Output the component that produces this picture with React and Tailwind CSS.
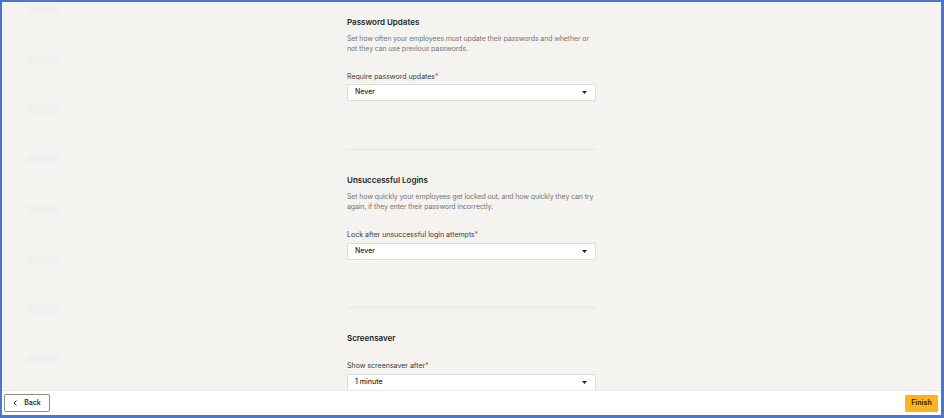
import React from 'react';

const font = { fontFamily: 'Inter, "Noto Sans", sans-serif' };

const Caret = () => (
  <svg width="5" height="3" viewBox="0 0 5 3" aria-hidden="true">
    <path d="M0 0h5L2.5 3z" fill="#1f1f1f" />
  </svg>
);

const Select = ({ value, className = '' }) => (
  <div
    className={`flex h-[17px] items-center justify-between rounded-[2px] border border-[#dcdcdc] bg-white pl-[7px] pr-[8px] text-[7px] font-medium text-[#2a2a2a] ${className}`}
  >
    <span>{value}</span>
    <Caret />
  </div>
);

const Label = ({ children, className = '' }) => (
  <div className={`h-[10px] text-[7px] leading-[10px] text-[#3a3a3a] ${className}`}>
    {children}
    <span className="text-[#e0453a]">*</span>
  </div>
);

const Title = ({ children, className = '' }) => (
  <h2 className={`h-[12px] text-[8px] font-semibold leading-[12px] text-[#1e1e1e] ${className}`}>
    {children}
  </h2>
);

const Desc = ({ children }) => (
  <p className="mt-[6px] text-[7px] leading-[10px] tracking-[-0.12px] text-[#767676]">{children}</p>
);

export default function App() {
  return (
    <div
      className="flex h-[418px] w-[944px] flex-col overflow-hidden border-t-2 border-l-2 border-r-[3px] border-b-[3px] border-[#4a78c8] bg-white"
      style={font}
    >
      <div className="grid h-[388px] grid-cols-[1fr_249px_1fr] overflow-hidden bg-[#f4f3ef]">
        {/* faded side nav */}
        <div className="flex flex-col gap-[41px] pl-[25px] pt-[3px]">
          {Array.from({ length: 8 }).map((_, i) => (
            <div key={i} className="h-[9px] w-[32px] bg-[#f0f0ee]" />
          ))}
        </div>

        <div className="pt-[14px]">
          <Title>Password Updates</Title>
          <Desc>
            Set how often your employees must update their passwords and whether or not they can
            use previous passwords.
          </Desc>
          <Label className="mt-[18px]">Require password updates</Label>
          <Select value="Never" className="mt-[2px]" />

          <div className="mt-[48px] h-px bg-[#e6e5e1]" />

          <Title className="mt-[24px]">Unsuccessful Logins</Title>
          <Desc>
            Set how quickly your employees get locked out, and how quickly they can try again, if
            they enter their password incorrectly.
          </Desc>
          <Label className="mt-[18px]">Lock after unsuccessful login attempts</Label>
          <Select value="Never" className="mt-[3px]" />

          <div className="mt-[47px] h-px bg-[#e6e5e1]" />

          <Title className="mt-[24px]">Screensaver</Title>
          <Label className="mt-[17px]">Show screensaver after</Label>
          <Select value="1 minute" className="mt-[3px]" />
        </div>

        <div />
      </div>

      <div className="flex flex-1 items-center justify-between border-t border-[#ecebe8] pl-[2px] pr-[3px]">
        <button className="flex h-[18px] w-[46px] items-center justify-center gap-[6px] rounded-[2px] border border-[#8f8c8c] bg-white text-[7px] font-semibold text-[#333]">
          <svg width="5" height="6" viewBox="0 0 5 6" aria-hidden="true">
            <path d="M3.5 0.5L1 3l2.5 2.5" fill="none" stroke="#333" strokeWidth="1" />
          </svg>
          Back
        </button>
        <button className="h-[17px] w-[33px] rounded-[1px] bg-[#fbb41f] text-[7px] font-bold text-[#3b2c05]">
          Finish
        </button>
      </div>
    </div>
  );
}
